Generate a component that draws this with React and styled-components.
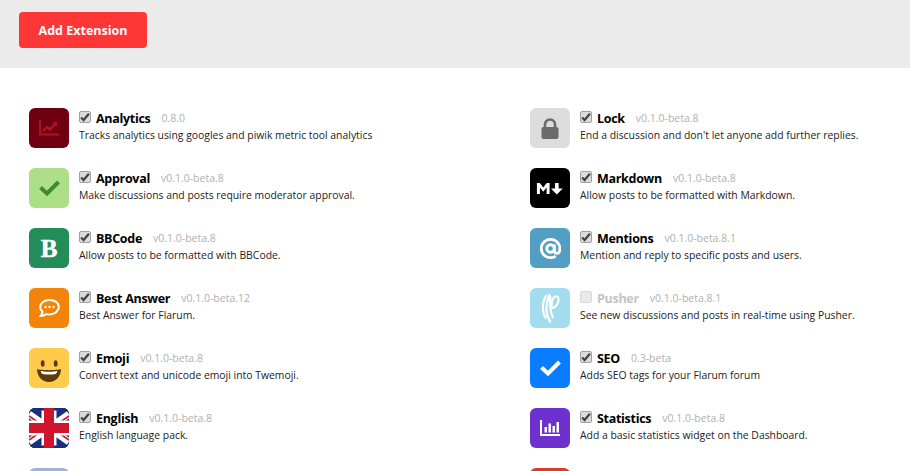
import React from "react";
import styled, { createGlobalStyle } from "styled-components";

const Global = createGlobalStyle`
  html, body { margin: 0; padding: 0; background: #fff; overflow: hidden; height: 471px; }
  body { font-family: "Open Sans", "Liberation Sans", sans-serif; color: #111; }
`;

const TrendIcon = () => (
  <svg width="20" height="16" viewBox="0 0 20 16" fill="none">
    <path d="M1 0v14.500h19" stroke="#b01228" strokeWidth="2" />
    <path d="M4 11l4-4 3 2.500L16 4" stroke="#b01228" strokeWidth="2.400" />
    <path d="M13 2h5v5z" fill="#b01228" />
  </svg>
);
const CheckIcon = ({ color }) => (
  <svg width="21" height="16" viewBox="0 0 21 16" fill="none">
    <path d="M1.500 7.500l6.500 6L19.500 2" stroke={color} strokeWidth="4" />
  </svg>
);
const ChatIcon = () => (
  <svg width="21" height="19" viewBox="0 0 21 19" fill="none">
    <path d="M10.500 1C5.300 1 1.200 4 1.200 8c0 1.900 1 3.500 2.400 4.700-.2 1.500-1 2.900-2 4.300 2 0 4-.7 5.600-1.900 1 .3 2.100.4 3.300.4 5.200 0 9.300-3.300 9.300-7.500S15.700 1 10.500 1z" stroke="#fff" strokeWidth="2" />
    <circle cx="6.500" cy="8" r="1.200" fill="#fff" />
    <circle cx="10.500" cy="8" r="1.200" fill="#fff" />
    <circle cx="14.500" cy="8" r="1.200" fill="#fff" />
  </svg>
);
const SmileIcon = () => (
  <svg width="24" height="30" viewBox="0 -7 24 30">
    <ellipse cx="5.700" cy="3.500" rx="1.900" ry="3.300" fill="#5c3a0a" />
    <ellipse cx="18.700" cy="3.500" rx="1.900" ry="3.300" fill="#5c3a0a" />
    <path d="M0 9c4 1.500 20 1.500 24 0 0 7-5 13-12 13S0 16 0 9z" fill="#5c3a0a" />
    <path d="M3.500 11c5 1 12 1 17 0-.5 1.500-1 2.200-1.800 3-4 .7-9.400.7-13.400 0C4.500 13.200 4 12.500 3.500 11z" fill="#fff" />
  </svg>
);
const FlagIcon = () => (
  <svg width="40" height="40" viewBox="0 0 40 40">
    <rect width="40" height="40" fill="#1a2f7c" />
    <path d="M0 6l40 28M40 6L0 34" stroke="#fff" strokeWidth="7" />
    <path d="M0 8l20 14M40 8L20 22M0 32l20-14M40 32L20 18" stroke="#cf142b" strokeWidth="1.800" />
    <path d="M20 0v40M0 20h40" stroke="#fff" strokeWidth="15" />
    <path d="M20 0v40M0 20h40" stroke="#cf142b" strokeWidth="10" />
    <path d="M0 0h40v2.500H0zM0 37.500h40V40H0z" fill="#1a2f7c" />
    <path d="M15 0h10v3H15zM15 37h10v3H15z" fill="#cf142b" />
  </svg>
);
const LockIcon = () => (
  <svg width="18" height="21" viewBox="0 0 18 21" fill="none">
    <path d="M4 10V6.500a5 5 0 0 1 10 0V10" stroke="#6b6b6b" strokeWidth="2.600" />
    <rect x="0.500" y="9" width="17" height="12" rx="2" fill="#6b6b6b" />
  </svg>
);
const MdIcon = () => (
  <svg width="29" height="13" viewBox="0 0 32 14" fill="#fff">
    <path d="M1 13V1h3.200L8 6l3.800-5H15v12h-3.300V6L8 10.500 4.300 6v7z" />
    <path d="M21 1h4v6h4.500L23 13.500 16.500 7H21z" />
  </svg>
);
const AtIcon = () => (
  <svg width="21" height="21" viewBox="0 0 24 24" fill="none" stroke="#fff" strokeWidth="3.200">
    <circle cx="12" cy="12" r="4.300" />
    <path d="M16.500 7.500v7c0 2 1.200 3 2.700 3 2 0 3.500-2 3.500-5.500C22.700 6 18 1.500 12 1.500S1.500 6 1.500 12 6 22.500 12 22.500c2.500 0 4.500-.6 6-1.700" />
  </svg>
);
const PusherIcon = () => (
  <svg width="19" height="29" viewBox="0 0 19 29" fill="none" stroke="#fff" strokeLinecap="round">
    <path d="M5 2C2.500 6 1.500 11 2 16c.3 3 1 5.500 2.500 7.500" strokeWidth="2.200" />
    <path d="M8.500 1C6 6 5 12 5.500 17c.4 4 1.500 7.500 3.500 10.500" strokeWidth="2.400" />
    <path d="M9.500 3c-1 5-.8 10 .3 14 .6 2.500 1.200 4.500 2.200 6.500" strokeWidth="2" />
    <path d="M11 14c-.6-4 .3-9 2.300-11 1.700-1.500 3.700-.6 4.200 1.500.5 3-1.500 7-5 9.500" strokeWidth="2" />
  </svg>
);
const BarsIcon = () => (
  <svg width="20" height="16" viewBox="0 0 20 16" fill="#fff">
    <path d="M0 0h2v14h18v2H0z" />
    <path d="M4.500 7h2.500v5.500H4.500zM8.500 3.500H11v9H8.500zM12.500 6H15v6.500h-2.500zM16.500 2H19v10.500h-2.500z" />
  </svg>
);

const Page = styled.div`
  width: 910px;
  height: 471px;
  overflow: hidden;
`;
const Toolbar = styled.div`
  background: #ebebeb;
  height: 68px;
  box-sizing: border-box;
  padding: 12px 19px;
`;
const AddButton = styled.button`
  width: 128px;
  height: 36px;
  border: 0;
  border-radius: 4px;
  background: #fe3636;
  color: #fff;
  font: 700 12.500px "Open Sans", sans-serif;
  padding: 0;
`;
const List = styled.div`
  display: grid;
  grid-template-columns: 501px 1fr;
  grid-auto-rows: 60px;
  padding: 40px 0 0 29px;
`;
const Row = styled.div`
  display: flex;
  gap: 10px;
`;
const Tile = styled.div`
  width: 40px;
  height: 40px;
  flex: none;
  border-radius: 6px;
  overflow: hidden;
  display: flex;
  align-items: center;
  justify-content: center;
  background: ${(p) => p.$bg};
  color: #fff;
`;
const LetterB = styled.span`
  font: 700 25px "Liberation Serif", serif;
  line-height: 1;
  -webkit-text-stroke: 0.5px #fff;
`;
const Info = styled.div`
  min-width: 0;
`;
const TitleLine = styled.div`
  display: flex;
  align-items: center;
  height: 20px;
  white-space: nowrap;
`;
const Box = styled.span`
  width: 12px;
  height: 12px;
  margin: -3px 5px 0 0;
  flex: none;
  box-sizing: border-box;
  border: 1px solid ${(p) => (p.$off ? "#d8d8d8" : "#a0a0a0")};
  border-radius: 2px;
  background: ${(p) => (p.$off ? "#e9e9e9" : "#dcdcdc")};
  display: flex;
  align-items: center;
  justify-content: center;
`;
const Name = styled.span`
  font-size: 12.500px;
  font-weight: 700;
  letter-spacing: -0.3px;
  color: ${(p) => (p.$off ? "#c4c4c4" : "#000")};
`;
const Version = styled.span`
  font-size: 10.500px;
  color: #b0b0b0;
  margin-left: 11px;
`;
const Desc = styled.div`
  font-size: 10.400px;
  line-height: 14px;
  color: #222;
  white-space: nowrap;
`;

const left = [
  { name: "Analytics", ver: "0.8.0", desc: "Tracks analytics using googles and piwik metric tool analytics", bg: "#6f0010", icon: <TrendIcon /> },
  { name: "Approval", ver: "v0.1.0-beta.8", desc: "Make discussions and posts require moderator approval.", bg: "#addf88", icon: <CheckIcon color="#3f8a35" /> },
  { name: "BBCode", ver: "v0.1.0-beta.8", desc: "Allow posts to be formatted with BBCode.", bg: "#238c59", icon: <LetterB>B</LetterB> },
  { name: "Best Answer", ver: "v0.1.0-beta.12", desc: "Best Answer for Flarum.", bg: "#f28509", icon: <ChatIcon /> },
  { name: "Emoji", ver: "v0.1.0-beta.8", desc: "Convert text and unicode emoji into Twemoji.", bg: "#ffcb4c", icon: <SmileIcon /> },
  { name: "English", ver: "v0.1.0-beta.8", desc: "English language pack.", bg: "#1a2f7c", icon: <FlagIcon /> },
  { bg: "#a2b2d8" },
];
const right = [
  { name: "Lock", ver: "v0.1.0-beta.8", desc: "End a discussion and don't let anyone add further replies.", bg: "#dddddd", icon: <LockIcon /> },
  { name: "Markdown", ver: "v0.1.0-beta.8", desc: "Allow posts to be formatted with Markdown.", bg: "#000", icon: <MdIcon /> },
  { name: "Mentions", ver: "v0.1.0-beta.8.1", desc: "Mention and reply to specific posts and users.", bg: "#539fc4", icon: <AtIcon /> },
  { name: "Pusher", ver: "v0.1.0-beta.8.1", desc: "See new discussions and posts in real-time using Pusher.", bg: "#a3dcee", icon: <PusherIcon />, off: true },
  { name: "SEO", ver: "0.3-beta", desc: "Adds SEO tags for your Flarum forum", bg: "#0a7cff", icon: <CheckIcon color="#fff" /> },
  { name: "Statistics", ver: "v0.1.0-beta.8", desc: "Add a basic statistics widget on the Dashboard.", bg: "#6d31cf", icon: <BarsIcon /> },
  { bg: "#d13e32" },
];
const items = left.flatMap((l, i) => [l, right[i]]);

export default function App() {
  return (
    <Page>
      <Global />
      <Toolbar>
        <AddButton>Add Extension</AddButton>
      </Toolbar>
      <List>
        {items.map((x, i) => (
          <Row key={i}>
            <Tile $bg={x.bg}>{x.icon}</Tile>
            <Info>
              <TitleLine>
                <Box $off={x.off}>
                  {!x.off && (
                    <svg width="10" height="10" viewBox="0 0 9 9" fill="none">
                      <path d="M1 5l2.200 2.200L8 1.500" stroke="#444" strokeWidth="2" />
                    </svg>
                  )}
                </Box>
                {x.name && <Name $off={x.off}>{x.name}</Name>}
                {x.ver && <Version>{x.ver}</Version>}
              </TitleLine>
              {x.desc && <Desc>{x.desc}</Desc>}
            </Info>
          </Row>
        ))}
      </List>
    </Page>
  );
}
